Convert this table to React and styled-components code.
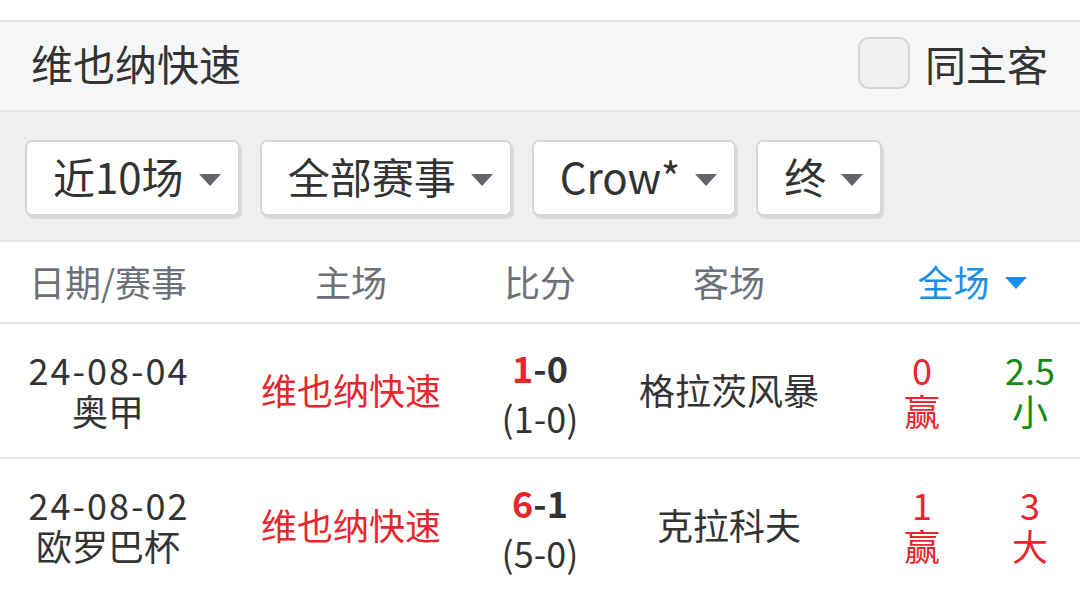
import React from "react";
import styled, { createGlobalStyle } from "styled-components";

const Global = createGlobalStyle`
  html, body { margin: 0; padding: 0; background: #ffffff; }
  body {
    font-family: "Noto Sans CJK SC", "Noto Sans", sans-serif;
    color: #333333;
    width: 1080px;
    overflow: hidden;
  }
`;

const Page = styled.div`
  padding-top: 20px;
  background: #ffffff;
`;

const TeamBar = styled.div`
  display: flex;
  align-items: center;
  justify-content: space-between;
  height: 88px;
  padding: 0 32px 0 31px;
  background: #f5f6f8;
  border-top: 2px solid #e6e6e6;
  border-bottom: 2px solid #e6e6e6;
`;

const TeamTitle = styled.div`
  font-size: 42px;
  line-height: 1;
  color: #333333;
  margin-top: -6px;
`;

const CheckLabel = styled.label`
  display: flex;
  align-items: center;
  gap: 15px;
  font-size: 41px;
  line-height: 1;
  color: #333333;
  margin-top: -6px;
`;

const CheckBox = styled.span`
  box-sizing: border-box;
  width: 52px;
  height: 52px;
  border: 2px solid #d4d4d4;
  border-radius: 11px;
  background: #f0f0f0;
`;

const FilterBar = styled.div`
  display: flex;
  align-items: flex-start;
  gap: 20px;
  height: 130px;
  box-sizing: border-box;
  padding: 28px 25px 0 25px;
  background: #efefef;
  border-bottom: 2px solid #e6e6e6;
`;

const Select = styled.div`
  box-sizing: border-box;
  height: 76px;
  display: flex;
  align-items: center;
  gap: 15px;
  padding: 0 17px 0 26px;
  background: #ffffff;
  border: 2px solid #d6d6d6;
  border-radius: 7px;
  box-shadow: 2px 3px 1px #d9d9d9;
  font-size: 42px;
  color: #333333;
  line-height: 1;
`;

const SelectText = styled.span`
  margin-top: -4px;
`;

const Caret = styled.span`
  width: 0;
  height: 0;
  border-left: 11px solid transparent;
  border-right: 11px solid transparent;
  border-top: 12px solid ${(p) => p.$color || "#62636b"};
  margin-top: 3px;
`;

const cols = "216px 270px 108px 270px 116px 100px";

const HeadRow = styled.div`
  display: grid;
  grid-template-columns: ${cols};
  height: 80px;
  align-items: center;
  border-bottom: 2px solid #e6e6e6;
  font-size: 36px;
  color: #6b7079;
`;

const HeadCell = styled.div`
  grid-column: ${(p) => p.$span || "auto"};
  display: flex;
  justify-content: center;
  align-items: center;
  gap: 15px;
  color: ${(p) => p.$color || "inherit"};
  margin-top: -2px;
`;

const Row = styled.div`
  display: grid;
  grid-template-columns: ${cols};
  height: 133px;
  align-items: center;
  border-bottom: 2px solid #e6e6e6;
  font-size: 36px;
  line-height: 41px;
`;

const Cell = styled.div`
  display: flex;
  flex-direction: column;
  align-items: center;
  text-align: center;
  color: ${(p) => p.$color || "#333333"};
  margin-top: ${(p) => (p.$shift ? "4px" : "-2px")};
`;

const DateText = styled.span`
  letter-spacing: 2px;
  margin-right: -2px;
`;

const Score = styled.span`
  font-weight: 700;
  color: #333333;
`;

const Half = styled.span`
  margin-top: 9px;
`;

const Win = styled.span`
  color: #e8262d;
`;

const RED = "#e8262d";
const GREEN = "#138a13";

const rows = [
  {
    date: "24-08-04",
    league: "奥甲",
    home: "维也纳快速",
    first: "1",
    rest: "-0",
    half: "(1-0)",
    away: "格拉茨风暴",
    hc: "0",
    hcRes: "赢",
    ou: "2.5",
    ouRes: "小",
    ouColor: GREEN,
  },
  {
    date: "24-08-02",
    league: "欧罗巴杯",
    home: "维也纳快速",
    first: "6",
    rest: "-1",
    half: "(5-0)",
    away: "克拉科夫",
    hc: "1",
    hcRes: "赢",
    ou: "3",
    ouRes: "大",
    ouColor: RED,
  },
];

export default function App() {
  return (
    <Page>
      <Global />
      <TeamBar>
        <TeamTitle>维也纳快速</TeamTitle>
        <CheckLabel>
          <CheckBox />
          同主客
        </CheckLabel>
      </TeamBar>
      <FilterBar>
        {["近10场", "全部赛事", "Crow*", "终"].map((t) => (
          <Select key={t}>
            <SelectText>{t}</SelectText>
            <Caret />
          </Select>
        ))}
      </FilterBar>
      <HeadRow>
        <HeadCell>日期/赛事</HeadCell>
        <HeadCell>主场</HeadCell>
        <HeadCell>比分</HeadCell>
        <HeadCell>客场</HeadCell>
        <HeadCell $span="span 2" $color="#1a8fe8">
          全场
          <Caret $color="#1a8fe8" />
        </HeadCell>
      </HeadRow>
      {rows.map((r) => (
        <Row key={r.date}>
          <Cell>
            <DateText>{r.date}</DateText>
            <span>{r.league}</span>
          </Cell>
          <Cell $color={RED}>{r.home}</Cell>
          <Cell $shift>
            <Score>
              <Win>{r.first}</Win>
              {r.rest}
            </Score>
            <Half>{r.half}</Half>
          </Cell>
          <Cell>{r.away}</Cell>
          <Cell $color={RED}>
            <span>{r.hc}</span>
            <span>{r.hcRes}</span>
          </Cell>
          <Cell $color={r.ouColor}>
            <span>{r.ou}</span>
            <span>{r.ouRes}</span>
          </Cell>
        </Row>
      ))}
    </Page>
  );
}
